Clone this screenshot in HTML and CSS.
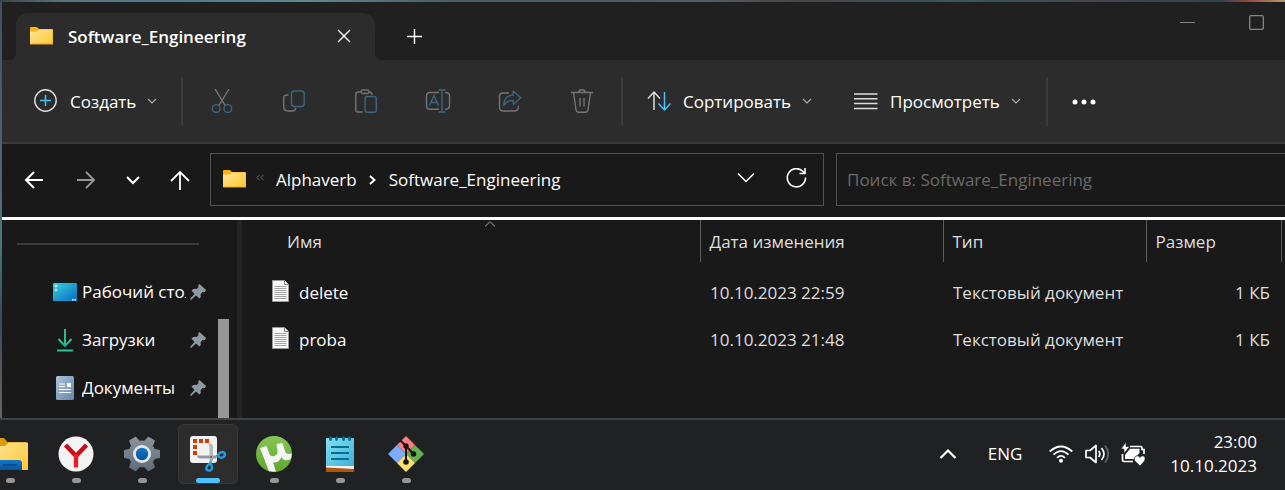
FILE: index.html
```html
<!DOCTYPE html>
<html lang="ru">
<head>
<meta charset="utf-8">
<meta name="viewport" content="width=device-width, initial-scale=1">
<title>Software_Engineering</title>
<link rel="stylesheet" href="styles.css">
</head>
<body class="desktop">
<svg class="defs" width="0" height="0" aria-hidden="true">
  <defs>
    <linearGradient id="gFolder" x1="0" y1="0" x2="1" y2="1"><stop offset="0" stop-color="#ffe69a"/><stop offset="1" stop-color="#ffc633"/></linearGradient>
    <linearGradient id="gDesk" x1="0" y1="0" x2="1" y2="1"><stop offset="0" stop-color="#35d3e4"/><stop offset="1" stop-color="#0a68bf"/></linearGradient>
    <linearGradient id="gDown" x1="0" y1="0" x2="0" y2="1"><stop offset="0" stop-color="#35c781"/><stop offset="1" stop-color="#18a7a0"/></linearGradient>
    <linearGradient id="gDoc" x1="0" y1="0" x2="1" y2="1"><stop offset="0" stop-color="#afc3db"/><stop offset="1" stop-color="#6484ad"/></linearGradient>
    <linearGradient id="gGear" gradientUnits="userSpaceOnUse" x1="0" y1="0" x2="0" y2="36"><stop offset="0" stop-color="#89939c"/><stop offset="1" stop-color="#5e6c78"/></linearGradient>
    <linearGradient id="gPad" x1="0" y1="0" x2="1" y2="1"><stop offset="0" stop-color="#82e2f5"/><stop offset="1" stop-color="#3fb0d2"/></linearGradient>
    <linearGradient id="gTorrent" x1="0" y1="0" x2="0" y2="1"><stop offset="0" stop-color="#85c556"/><stop offset="1" stop-color="#5fa82a"/></linearGradient>
    <linearGradient id="gBlue" x1="0" y1="0" x2="0" y2="1"><stop offset="0" stop-color="#1478cc"/><stop offset="1" stop-color="#0a5199"/></linearGradient>
    <symbol id="folder" viewBox="0 0 23 18"><path d="M0 1Q0 0 1 0H6.500Q7 0 8 1L9 2H22Q23 2 23 3V17H0Z" fill="#f9b115"/><path d="M0 4.500H7L9 2.500H22.500V17H0Z" fill="url(#gFolder)"/><path d="M0 17H23" stroke="#eda71f"/></symbol>
    <symbol id="chev" viewBox="0 0 10 6"><path d="M1 1L5 5L9 1" fill="none" stroke="currentColor" stroke-width="1.200"/></symbol>
    <symbol id="pin" viewBox="0 0 16 16"><path d="M9.500 0L16 6Q15 9 12.500 8L10.500 10.500Q11.500 13 9.500 14.500L6 11.500L1 16L0 15L4.500 10L1.500 6.500Q3.500 4 6.500 5L8.500 3.300Q7.500 1 9.500 0Z" fill="#8f9ba3"/></symbol>
    <symbol id="txt" viewBox="0 0 17 22"><path d="M.5.500H12.500L16.500 4.500V21.500H.5Z" fill="#f8f8f8" stroke="#999"/><path d="M12.500.500V4.500H16.500" fill="#fff" stroke="#777"/><path d="M2.500 6.500H14.500M2.500 8.500H14.500M2.500 10.500H14.500M2.500 12.500H14.500M2.500 14.500H14.500M2.500 16.500H14.500M2.500 18.500H14.500" stroke="#a3a3a3"/></symbol>
  </defs>
</svg>

<div class="window">
  <header class="titlebar">
    <div class="tab">
      <svg class="folder" aria-hidden="true"><use href="#folder"/></svg>
      <span class="tab-title">Software_Engineering</span>
      <button class="icon-btn" aria-label="Закрыть вкладку"><svg width="14" height="14" viewBox="0 0 14 14"><path d="M1 1L13 13M13 1L1 13" stroke="#fff" stroke-width="1.400"/></svg></button>
    </div>
    <button class="icon-btn new-tab" aria-label="Новая вкладка"><svg width="16" height="16" viewBox="0 0 16 16"><path d="M7.500 0V15M0 7.500H15" stroke="#fff" stroke-width="1.400"/></svg></button>
    <div class="window-controls">
      <button class="icon-btn" aria-label="Свернуть"><svg width="15" height="15" viewBox="0 0 15 15"><path d="M0 7.500H15" stroke="#858585"/></svg></button>
      <button class="icon-btn" aria-label="Развернуть"><svg width="15" height="15" viewBox="0 0 15 15"><rect x=".7" y=".7" width="13.600" height="13.600" rx="1.200" fill="none" stroke="#858585" stroke-width="1.300"/></svg></button>
    </div>
  </header>

  <div class="toolbar" role="toolbar">
    <button class="cmd cmd-new"><svg width="24" height="24" viewBox="0 0 24 24" fill="none"><circle cx="11.500" cy="11.500" r="10.700" stroke="#dedede" stroke-width="1.400"/><path d="M11.500 6V17M6 11.500H17" stroke="#4cc2ff" stroke-width="1.500"/></svg><span>Создать</span><svg class="chev"><use href="#chev"/></svg></button>
    <span class="sep"></span>
    <button class="tool" disabled aria-label="Вырезать"><svg width="24" height="24" viewBox="0 0 24 24" fill="none" stroke-width="1.400"><path d="M5 0L15.300 16.700M19 0L8.700 16.700" stroke="#747474"/><circle cx="6.200" cy="19.500" r="3.900" stroke="#3b6680"/><circle cx="17.800" cy="19.500" r="3.900" stroke="#3b6680"/></svg></button>
    <button class="tool" disabled aria-label="Копировать"><svg width="24" height="24" viewBox="0 0 24 24" fill="none" stroke-width="1.400"><path d="M6.500 6H5Q1.700 6 1.700 9V17.500Q1.700 22 6 22H10.500Q13.500 22 13.800 19" stroke="#747474"/><rect x="9.500" y="2" width="12.700" height="15.500" rx="3" stroke="#3b6680"/></svg></button>
    <button class="tool" disabled aria-label="Вставить"><svg width="24" height="24" viewBox="0 0 24 24" fill="none" stroke-width="1.400"><path d="M7 3H4.500Q1.800 3 1.800 5V21Q1.800 23 4 23H8.500M15 3Q18 3 18 6" stroke="#747474"/><rect x="7" y="1" width="8" height="3.500" rx="1.700" stroke="#747474"/><rect x="11" y="7.500" width="11.300" height="15.700" rx="2" stroke="#3b6680"/></svg></button>
    <button class="tool" disabled aria-label="Переименовать"><svg width="26" height="24" viewBox="0 0 26 24" fill="none" stroke-width="1.400"><path d="M14 3.500H5Q1.500 3.500 1.500 7V16.500Q1.500 20.300 5 20.300H14M20 3.500Q24.500 3.500 24.500 7V16.500Q24.500 20.300 20 20.300" stroke="#747474"/><path d="M13.500 1H20.500M13.500 23H20.500M17 1V23M4.500 16.500L9 6.500L13.500 16.500M6 13.500H12" stroke="#3b6680"/></svg></button>
    <button class="tool" disabled aria-label="Поделиться"><svg width="24" height="24" viewBox="0 0 24 24" fill="none" stroke-width="1.400"><path d="M11 4H5Q1.500 4 1.500 7.500V18Q1.500 22 5 22H16Q20.300 22 20.300 18.500V16.500" stroke="#747474"/><path d="M15.200 2L22.800 8.700L15.200 15.500V11.500Q9 11 5.500 16.500Q6.500 6.500 15.200 6Z" stroke="#3b6680" stroke-linejoin="round"/></svg></button>
    <button class="tool" disabled aria-label="Удалить"><svg width="24" height="24" viewBox="0 0 24 24" fill="none" stroke="#747474" stroke-width="1.400"><path d="M1 3.500H23M3.500 3.500L6 20.500Q6.300 23.300 8.500 23.300H15.500Q17.700 23.300 18 20.500L20.500 3.500M8.700 3.500Q9 .7 12 .7Q15 .7 15.300 3.500M10 9V17.500M14 9V17.500"/></svg></button>
    <span class="sep"></span>
    <button class="cmd cmd-sort"><svg width="24" height="24" viewBox="0 0 24 24" fill="none" stroke-width="1.500"><path d="M7 21V3M1 9.500L7 3L13 9.500" stroke="#dcdcdc"/><path d="M17.500 3V21M11.500 14.500L17.500 21L23.500 14.500" stroke="#4cc2ff"/></svg><span>Сортировать</span><svg class="chev"><use href="#chev"/></svg></button>
    <button class="cmd cmd-view"><svg width="24" height="24" viewBox="0 0 24 24"><path d="M0 5H23.500M0 9.800H23.500M0 14.600H23.500M0 19.400H23.500" stroke="#dedede" stroke-width="1.500"/></svg><span>Просмотреть</span><svg class="chev"><use href="#chev"/></svg></button>
    <span class="sep"></span>
    <button class="tool" aria-label="Ещё"><svg width="24" height="6" viewBox="0 0 24 6" fill="#fff"><circle cx="3" cy="3" r="2.500"/><circle cx="12" cy="3" r="2.500"/><circle cx="21" cy="3" r="2.500"/></svg></button>
  </div>

  <nav class="navbar">
    <div class="nav-buttons">
      <button class="icon-btn" aria-label="Назад"><svg width="20" height="20" viewBox="0 0 20 20" fill="none" stroke="#fff" stroke-width="2"><path d="M19 10H2M10 2L2 10L10 18"/></svg></button>
      <button class="icon-btn" aria-label="Вперёд"><svg width="20" height="20" viewBox="0 0 20 20" fill="none" stroke="#969696" stroke-width="2"><path d="M1 10H18M10 2L18 10L10 18"/></svg></button>
      <button class="icon-btn" aria-label="Последние расположения"><svg width="14" height="20" viewBox="0 0 14 20" fill="none" stroke="#fff" stroke-width="2"><path d="M1 7L7 13L13 7"/></svg></button>
      <button class="icon-btn" aria-label="Вверх"><svg width="20" height="20" viewBox="0 0 20 20" fill="none" stroke="#fff" stroke-width="1.800"><path d="M10 20V2M1 11L10 2L19 11"/></svg></button>
    </div>
    <div class="address">
      <svg class="folder" aria-hidden="true"><use href="#folder"/></svg>
      <svg class="crumb-more" width="8" height="12" viewBox="0 0 8 12" fill="none" stroke="#686868"><path d="M3.500 1L.8 3.500L3.500 6M7.500 1L4.800 3.500L7.500 6"/></svg>
      <a class="crumb" href="#">Alphaverb</a>
      <svg class="crumb-sep" width="7" height="12" viewBox="0 0 7 12" fill="none" stroke="#fff" stroke-width="1.900"><path d="M1 2L5.500 6L1 10"/></svg>
      <a class="crumb" href="#">Software_Engineering</a>
      <span class="address-actions">
        <button class="icon-btn" aria-label="Журнал адресов"><svg width="18" height="22" viewBox="0 0 18 22" fill="none" stroke="#fff" stroke-width="1.500"><path d="M1 5.500L9 13.500L17 5.500"/></svg></button>
        <button class="icon-btn" aria-label="Обновить"><svg width="22" height="22" viewBox="0 0 22 22" fill="none" stroke="#fff" stroke-width="1.600"><path d="M20.500 9.500A9.100 9.100 0 1 1 18 3.500L20 5.500M20 0V5.500H14.500"/></svg></button>
      </span>
    </div>
    <input class="search" type="search" placeholder="Поиск в: Software_Engineering" aria-label="Поиск в: Software_Engineering">
  </nav>

  <div class="body">
    <aside class="sidebar">
      <div class="side-list">
        <hr class="side-rule">
        <a class="place" href="#"><svg width="24" height="24" viewBox="0 0 24 24"><rect y="3" width="24" height="18" rx="1.300" fill="url(#gDesk)"/><path d="M0 20.500H24" stroke="#1694d0"/><path d="M2 5h2v2H2zM2 9h2v2H2zM19 19h1.500v1.500H19zM21.500 19H23v1.500h-1.500z" fill="#fff"/></svg><span>Рабочий стол</span><svg class="pin"><use href="#pin"/></svg></a>
        <a class="place" href="#"><svg width="24" height="24" viewBox="0 0 24 24" fill="none" stroke="url(#gDown)" stroke-width="2"><path d="M5.500 11L12 18L18.500 11"/><path d="M11 1h2v16h-2z" fill="#2dbd8b" stroke="none"/><path d="M4 21.500h16v2H4z" fill="#28c495" stroke="none"/></svg><span>Загрузки</span><svg class="pin"><use href="#pin"/></svg></a>
        <a class="place" href="#"><svg width="24" height="24" viewBox="0 0 24 24"><rect x="3" width="18" height="24" rx="1.500" fill="url(#gDoc)"/><path d="M6 8H12M6 10.500H12M6 13.500H18M6 16.500H18" stroke="#fff" stroke-width="1.200"/><path d="M14 7h4v4h-4z" fill="#fff"/></svg><span>Документы</span><svg class="pin"><use href="#pin"/></svg></a>
      </div>
      <div class="scroll"></div>
    </aside>
    <main class="files">
      <svg class="sort-mark" width="12" height="6" viewBox="0 0 12 6" fill="none" stroke="#a0a0a0"><path d="M1 5.500L6 .7L11 5.500"/></svg>
      <table class="file-table">
        <colgroup><col><col class="col-date"><col class="col-type"><col class="col-size"><col class="col-end"></colgroup>
        <thead><tr><th class="name-head">Имя</th><th>Дата изменения</th><th>Тип</th><th>Размер</th><th></th></tr></thead>
        <tbody>
          <tr><td class="name"><svg class="txt"><use href="#txt"/></svg>delete</td><td>10.10.2023 22:59</td><td>Текстовый документ</td><td class="size">1 КБ</td><td></td></tr>
          <tr><td class="name"><svg class="txt"><use href="#txt"/></svg>proba</td><td>10.10.2023 21:48</td><td>Текстовый документ</td><td class="size">1 КБ</td><td></td></tr>
        </tbody>
      </table>
    </main>
  </div>
</div>

<footer class="taskbar">
  <div class="apps">
    <button class="app" aria-label="Проводник"><svg width="36" height="36" viewBox="0 0 36 36"><path d="M0 4Q0 2 2 2H12L15.500 6H34Q36 6 36 8V34H0Z" fill="#df9b08"/><path d="M0 10H13L17 6.500H34Q36 6.500 36 8V34H0Z" fill="url(#gFolder)"/><path d="M6 34V27Q6 24 9 24H27Q30 24 30 27V34Z" fill="url(#gBlue)"/><path d="M11 29H25" stroke="#0b4582" stroke-width="1.500"/></svg></button>
    <button class="app" aria-label="Яндекс Браузер"><svg width="36" height="36" viewBox="0 0 36 36"><circle cx="18" cy="18" r="17.500" fill="#f3f3f3"/><path d="M7.500 9L18 20M28.500 9L18 20" stroke="#c80e19" stroke-width="4.500"/><path d="M18 18V31.500" stroke="#ed1c24" stroke-width="4.300"/></svg></button>
    <button class="app" aria-label="Параметры"><svg width="36" height="36" viewBox="0 0 36 36"><path d="M36 14.500V21.500L30.500 22.500L28.500 26L30.500 31.300L24.300 34.900L20.500 30.800H15.500L11.700 34.900L5.500 31.300L7.500 26L5.500 22.500L0 21.500V14.500L5.500 13.500L7.500 10L5.500 4.700L11.700 1.100L15.500 5.200H20.500L24.300 1.100L30.500 4.700L28.500 10L30.500 13.500Z" fill="url(#gGear)" stroke="url(#gGear)" stroke-linejoin="round"/><circle cx="18" cy="18" r="9" fill="#e4e7e9"/><circle cx="18" cy="18" r="6.200" fill="url(#gBlue)"/></svg></button>
    <button class="app app-active" aria-label="Ножницы"><svg width="36" height="36" viewBox="0 0 36 36"><rect width="27" height="27" rx="3" fill="#f1f2f2"/><path d="M3 3h4v4H3zM9 3h4v4H9zM15 3h4v4h-4zM3 9h4v4H3zM3 15h4v4H3z" fill="#d83b01"/><path d="M18.500 7Q23 7 23 11V22H19.500V11Z" fill="#b3b9be"/><path d="M7 19.500H28L26 22.500H11Q7 22.500 7 19.500Z" fill="#92999f"/><path d="M19.500 20H23V24L21 28H19.500Z" fill="#a9afb4"/><circle cx="21" cy="21" r="1" fill="#555"/><path d="M27.500 19.500L30 16.700Q33 15 34.500 17Q35.500 19.500 33.500 21Q31 22.500 29.500 21Z" fill="none" stroke="#219de4" stroke-width="2.400"/><path d="M20.500 27L17.500 29.500Q15.500 32 17 34Q19.500 35.500 21.500 33.500Q22.500 31.500 21.500 29.500Z" fill="none" stroke="#219de4" stroke-width="2.400"/></svg></button>
    <button class="app" aria-label="µTorrent"><svg width="36" height="36" viewBox="0 0 36 36"><circle cx="18" cy="18" r="18" fill="url(#gTorrent)"/><path d="M4 12L10.500 10L13.500 18Q15 21 18 20Q22 19 21.500 14.500L20.500 8L26.500 7L29 15Q30 19 35.500 17.500Q36 19.500 34.500 23Q32.500 24.500 30 24.200Q26.500 24 25.500 21Q23 27 17 26.500L20 35.800L13 35.300Z" fill="#f5f5f5"/></svg></button>
    <button class="app" aria-label="Блокнот"><svg width="36" height="36" viewBox="0 0 36 36"><path d="M4 31H32V36H4Z" fill="#b3540b"/><path d="M4 28H32V33L4 31.500Z" fill="#f3f3f3"/><rect x="4" y="2" width="28" height="28" rx="1" fill="url(#gPad)"/><path d="M9 11H27M9 17H27M9 23H27" stroke="#066b96" stroke-width="2"/><g fill="#066b96"><ellipse cx="8.500" cy="2.500" rx="1.500" ry="2.500"/><ellipse cx="14.500" cy="2.500" rx="1.500" ry="2.500"/><ellipse cx="21.500" cy="2.500" rx="1.500" ry="2.500"/><ellipse cx="27.500" cy="2.500" rx="1.500" ry="2.500"/></g></svg></button>
    <button class="app" aria-label="Git"><svg width="36" height="36" viewBox="0 0 36 36"><g stroke-linejoin="round" stroke-width="1.500"><path d="M18 1L26 9L18 17L10 9Z" fill="#fb7c80" stroke="#fb7c80"/><path d="M9 10L17 18L9 26L1 18Z" fill="#7cadfb" stroke="#7cadfb"/><path d="M27 10L35 18L27 26L19 18Z" fill="#63b151" stroke="#63b151"/><path d="M18 19L26 27L18 35L10 27Z" fill="#ffdf6d" stroke="#ffdf6d"/></g><path d="M12.500 4.500L18 10V26M18 10L25.500 18" stroke="#161616" stroke-width="2" fill="none"/><circle cx="18" cy="10" r="2.700" fill="#161616"/><circle cx="25.500" cy="18" r="2.800" fill="#161616"/><circle cx="18" cy="26" r="2.800" fill="#161616"/></svg></button>
  </div>
  <div class="tray">
    <button class="icon-btn" aria-label="Скрытые значки"><svg width="18" height="12" viewBox="0 0 18 12" fill="none" stroke="#fff" stroke-width="2.200"><path d="M1.500 10L9 2.500L16.500 10"/></svg></button>
    <button class="lang">ENG</button>
    <button class="status" aria-label="Сеть, звук, батарея">
      <svg width="24" height="24" viewBox="0 0 24 24" fill="none" stroke="#fff" stroke-width="1.800"><path d="M.7 9.500Q12-.5 23.300 9.500M4.500 12.700Q12 5.500 19.500 12.700M8 15.800Q12 12 16 15.800"/><circle cx="12" cy="18.700" r="2" fill="#fff" stroke="none"/></svg>
      <svg width="24" height="24" viewBox="0 0 24 24" fill="none" stroke="#fff" stroke-width="1.700" stroke-linejoin="round"><path d="M1 8.500H5L11 3.500V20.500L5 15.500H1Z"/><path d="M13.700 9Q16 12 13.700 15M16.500 6Q21.500 12 16.500 18"/><path d="M20 3.500Q26.500 12 20 20.500" stroke="#666"/></svg>
      <svg width="24" height="24" viewBox="0 0 24 24"><path d="M9 4.500H19.500Q21 4.500 21 6V7.500H23V12M5.500 19.500H3Q1.500 19.500 1.500 18V12M5 19.500H12" fill="none" stroke="#fff" stroke-width="1.700"/><path d="M9 6.700H18.500V11L13 17H4V13Z" fill="#fff"/><path d="M5 0V4.500H8.500L3 11.500V7H0Z" fill="#fff" stroke="#202122" stroke-width=".6"/><path d="M19 24L13.500 18.500Q12.500 15.500 15 14Q17.500 13 19 15.500Q20.500 13 23 14Q25 16 23.500 19Z" fill="#fff" stroke="#202122" stroke-width=".7"/></svg>
    </button>
    <button class="clock"><time>23:00</time><time>10.10.2023</time></button>
  </div>
</footer>
</body>
</html>
```
FILE: styles.css
```css
* { box-sizing: border-box; }

.desktop {
  margin: 0;
  min-height: 100vh;
  display: flex;
  flex-direction: column;
  overflow-x: hidden;
  color: #fff;
  font: 17px/24px "Open Sans", "Noto Sans", sans-serif;
  background:
    linear-gradient(90deg, #3c4448, #56777f 5%, #507b91 15%, #5e8a91 24%, #485d67 35%, #515d62 55%, #48444a 62%, #37595a 75%, #44464d 85%, #2f4350 95%, #8e473d 97%, #b69a6b) 0 0 / 100% 2px no-repeat,
    linear-gradient(#47505a, #58666f 40%, #447c82 48%, #3f4a56 65%, #8a7566) 0 0 / 2px 100% no-repeat,
    #202122;
}

.defs { position: absolute; }
svg { display: block; flex: none; }
button { font: inherit; color: inherit; border: 0; background: none; padding: 0; }
a { color: inherit; text-decoration: none; }

.window {
  flex: 1;
  display: flex;
  flex-direction: column;
  margin: 2px 0 0 2px;
  border-top-left-radius: 12px;
  overflow: hidden;
  background: #191919;
}

.icon-btn { display: grid; place-items: center; }
.folder { width: 23px; height: 18px; }

/* Title bar */
.titlebar {
  display: flex;
  align-items: center;
  padding: 11px 21px 0 14px;
  background: #202020;
}
.tab {
  position: relative;
  display: flex;
  align-items: center;
  width: 359px;
  height: 47px;
  padding: 0 24px 2px 14px;
  border-radius: 12px 12px 0 0;
  background: #2c2c2c;
}
.tab::before, .tab::after {
  content: "";
  position: absolute;
  bottom: 0;
  width: 6px;
  height: 6px;
}
.tab::before { right: 100%; background: radial-gradient(circle at 0 0, #202020 6px, #2c2c2c 6px); }
.tab::after { left: 100%; background: radial-gradient(circle at 100% 0, #202020 6px, #2c2c2c 6px); }
.tab-title { flex: 1; margin-left: 15px; padding-top: 2px; font-weight: 600; }
.new-tab { margin-left: 32px; }
.window-controls {
  display: flex;
  gap: 54px;
  align-self: flex-start;
  margin: 2px 0 0 auto;
}

/* Command bar */
.toolbar {
  display: flex;
  align-items: center;
  padding: 16px 0 16px 11px;
  background: #2c2c2c;
  border-bottom: 2px solid #3b3b3b;
}
.cmd { display: flex; align-items: center; padding-left: 21px; height: 50px; }
.cmd span { margin: 0 11px 0 12px; padding-top: 2px; white-space: nowrap; }
.cmd-new { width: 165px; }
.cmd-sort { width: 207px; }
.cmd-view { width: 210px; }
.chev { width: 10px; height: 6px; color: #aaa; }
.tool { display: grid; place-items: center; width: 72px; height: 50px; }
.sep { width: 2px; height: 49px; margin: 0 3px; background: #3b3b3b; }
.sep + .tool:last-child { width: 66px; padding-top: 2px; }

/* Navigation row */
.navbar {
  display: flex;
  align-items: center;
  gap: 12px;
  padding: 9px 0 11px 22px;
  border-bottom: 3px solid #fff;
}
.nav-buttons { display: flex; gap: 32px; width: 174px; }
.nav-buttons .icon-btn:nth-child(3) { margin: 0 -2px; }
.address, .search { height: 53px; border: 1px solid #535353; }
.address { flex: 1; display: flex; align-items: center; padding: 0 16px 0 12px; }
.address .folder { margin-bottom: 2px; }
.crumb-more { margin: 0 12px 0 10px; }
.crumb-sep { margin: 0 13px 0 12px; }
.address-actions { display: flex; gap: 30px; margin: 0 0 2px auto; }
.search {
  width: 455px;
  margin-right: -6px;
  padding: 0 10px;
  border-radius: 0;
  outline: 0;
  font: inherit;
  color: #fff;
  background: transparent;
}
.search::placeholder { color: #6a6a6a; opacity: 1; }

/* Places and file list */
.body { flex: 1; display: flex; }
.sidebar {
  display: flex;
  width: 240px;
  border-right: 5px solid #242424;
}
.side-list { width: 204px; }
.side-rule { height: 2px; margin: 23px 7px 23px 15px; border: 0; background: #3b3b3b; }
.place { display: flex; align-items: center; height: 48px; padding-left: 51px; }
.place span { width: 104px; margin: 0 4px 0 5px; overflow: hidden; white-space: nowrap; }
.pin { width: 16px; height: 16px; }
.scroll { width: 11px; margin: 99px 0 0 12px; background: #969696; }

.files { position: relative; flex: 1; }
.sort-mark { position: absolute; top: 1px; left: 242px; }
.file-table { width: 100%; table-layout: fixed; border-collapse: collapse; }
.col-date { width: 243px; }
.col-type { width: 203px; }
.col-size { width: 135px; }
.col-end { width: 4px; }
.file-table th, .file-table td { padding: 0 0 0 10px; text-align: left; font-weight: 400; color: #dedede; white-space: nowrap; }
.file-table th { height: 42px; padding: 2px 0 0 9px; border-left: 1px solid #5c5c5c; }
.file-table .name-head { padding-left: 45px; border: 0; }
.file-table th:last-child, .file-table td:last-child { padding: 0; }
.file-table tbody::before { content: ""; display: block; height: 7px; }
.file-table td { height: 47px; }
.file-table .name { padding-left: 30px; color: #fff; }
.file-table .size { padding: 0 11px 0 0; text-align: right; }
.txt { display: inline-block; width: 17px; height: 22px; margin-right: 10px; vertical-align: -3px; }

/* Taskbar */
.taskbar {
  display: flex;
  justify-content: space-between;
  overflow: hidden;
  padding: 4px 28px 6px 0;
  border-top: 2px solid #414242;
  background: #202122;
}
.apps { display: flex; gap: 6px; margin-left: -20px; }
.app {
  display: flex;
  flex-direction: column;
  align-items: center;
  justify-content: space-between;
  width: 60px;
  height: 60px;
  padding: 12px 0 1px;
  border-radius: 6px;
}
.app::after { content: ""; width: 9px; height: 5px; border-radius: 3px; background: #969696; }
.app-active { background: #2d2d2d; box-shadow: inset 0 0 0 1px #383838; }
.app-active::after { width: 24px; background: #4cc2ff; }
.tray { display: flex; align-items: center; }
.lang { margin: 0 27px 0 31px; }
.status { display: flex; gap: 12px; margin-right: 25px; }
.clock { display: flex; flex-direction: column; text-align: right; }
```
